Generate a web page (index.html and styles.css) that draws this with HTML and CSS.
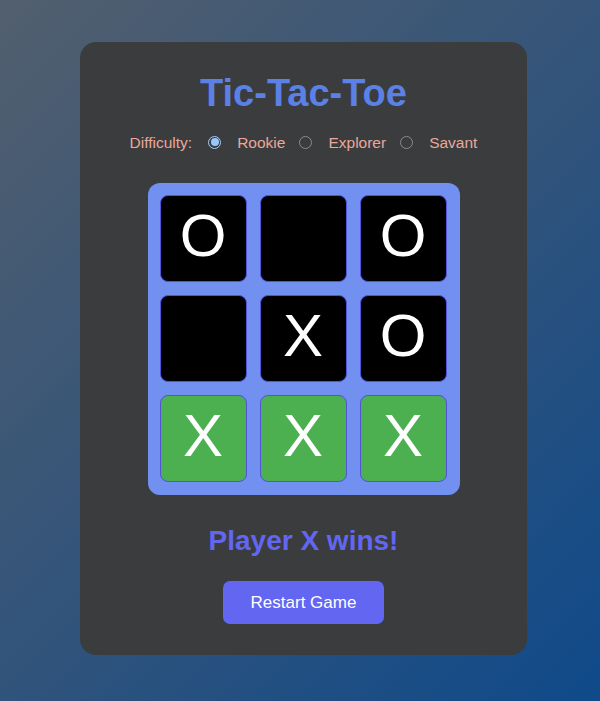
FILE: index.html
```html
<!DOCTYPE html>
<html lang="en">
<head>
<meta charset="utf-8">
<title>Tic-Tac-Toe</title>
<link rel="stylesheet" href="styles.css">
</head>
<body>
<div class="card">
  <h1 class="title">Tic-Tac-Toe</h1>
  <div class="difficulty">
    <span class="diff-label">Difficulty:</span>
    <label class="option"><span class="radio checked"></span><span class="opt-text">Rookie</span></label>
    <label class="option"><span class="radio"></span><span class="opt-text">Explorer</span></label>
    <label class="option"><span class="radio"></span><span class="opt-text">Savant</span></label>
  </div>
  <div class="board">
    <div class="cell">O</div>
    <div class="cell"></div>
    <div class="cell">O</div>
    <div class="cell"></div>
    <div class="cell">X</div>
    <div class="cell">O</div>
    <div class="cell win">X</div>
    <div class="cell win">X</div>
    <div class="cell win">X</div>
  </div>
  <div class="status">Player X wins!</div>
  <button class="restart">Restart Game</button>
</div>
</body>
</html>
```
FILE: styles.css
```css
* { box-sizing: border-box; }
html, body { margin: 0; padding: 0; }
body {
  width: 600px;
  height: 701px;
  background: linear-gradient(135deg, #525f6e 0%, #33547a 50%, #0f4a8a 100%);
  font-family: "Liberation Sans", Arial, sans-serif;
  display: flex;
  justify-content: center;
  align-items: flex-start;
  padding-top: 42px;
  padding-left: 7px;
  overflow: hidden;
}
.card {
  width: 447px;
  height: 613px;
  background: #3b3c3e;
  border-radius: 16px;
  padding-top: 29px;
  display: flex;
  flex-direction: column;
  align-items: center;
}
.title {
  margin: 0;
  font-size: 38px;
  line-height: 44px;
  font-weight: bold;
  color: #5b80e6;
}
.difficulty {
  margin-top: 18px;
  display: flex;
  align-items: center;
  height: 20px;
  font-size: 15.5px;
  color: #e9a89c;
}
.diff-label { margin-right: 16px; }
.option { display: flex; align-items: center; }
.option + .option { margin-left: 14px; }
.radio {
  width: 13px;
  height: 13px;
  border-radius: 50%;
  border: 1px solid #8a8b8d;
  background: #3b3c3e;
  margin-right: 16px;
  position: relative;
  top: -1px;
}
.radio.checked {
  border: 1px solid #a8cdf8;
  background: #3b3c3e;
}
.radio.checked::after {
  content: "";
  position: absolute;
  left: 1.5px;
  top: 1.5px;
  width: 8px;
  height: 8px;
  border-radius: 50%;
  background: #99c6fb;
}
.board {
  margin-top: 30px;
  width: 312px;
  height: 312px;
  background: #7190f0;
  border-radius: 12px;
  padding: 12px;
  display: grid;
  grid-template-columns: repeat(3, 87px);
  grid-template-rows: repeat(3, 87px);
  gap: 13px;
}
.cell {
  background: #000;
  border: 1px solid #5354d6;
  border-radius: 8px;
  color: #fff;
  font-size: 60px;
  line-height: 1;
  display: flex;
  align-items: center;
  justify-content: center;
  padding-bottom: 6px;
}
.cell.win { background: #4caf50; }
.status {
  margin-top: 30px;
  font-size: 28px;
  line-height: 32px;
  font-weight: bold;
  color: #6366f1;
}
.restart {
  margin-top: 24px;
  width: 161px;
  height: 43px;
  background: #6366f1;
  color: #fff;
  border: none;
  border-radius: 7px;
  font-family: "Liberation Sans", Arial, sans-serif;
  font-size: 17px;
  padding: 0;
}
```
